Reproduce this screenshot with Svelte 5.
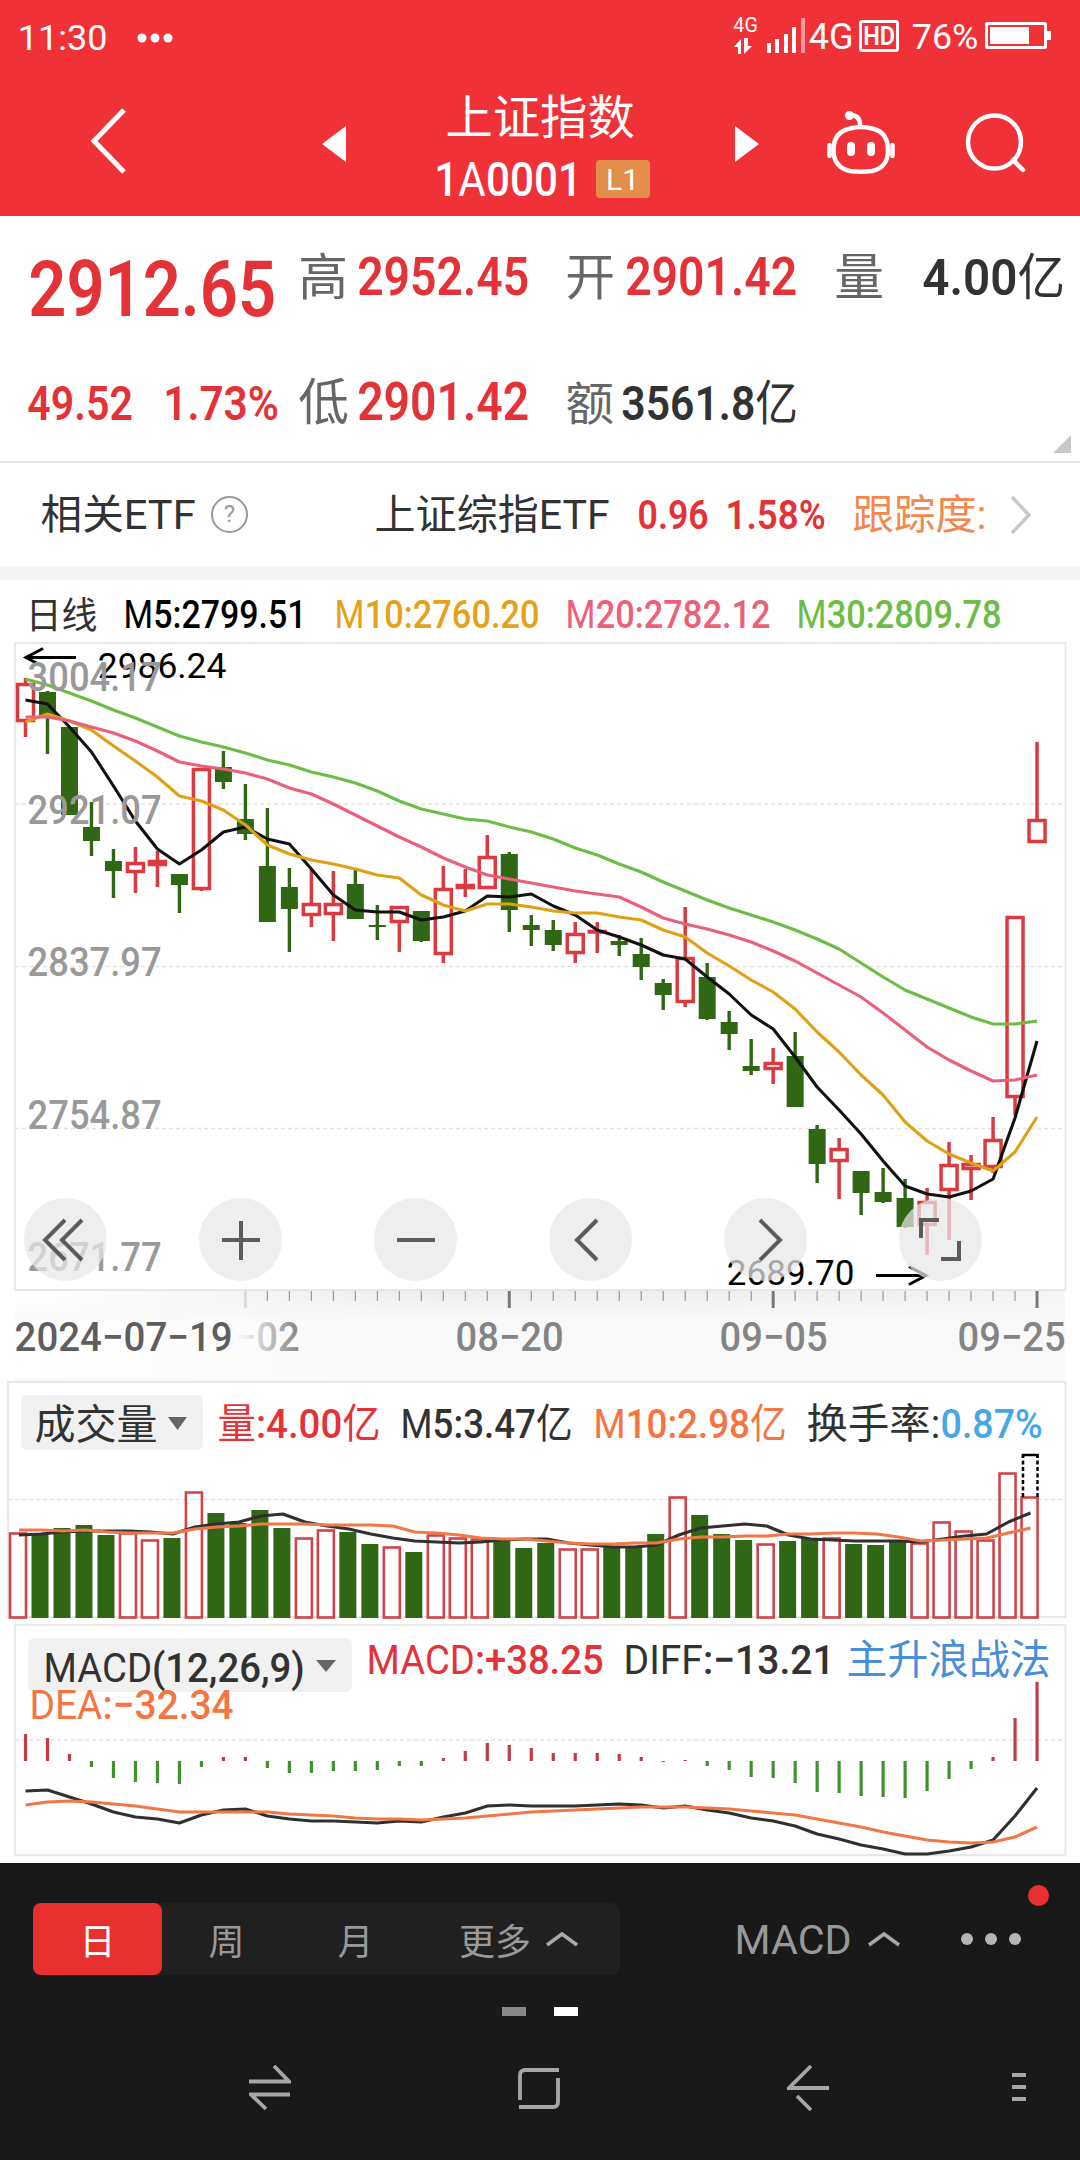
<script>
  const START = 25.5;
  const STEP = 21.99;
  const VOL_START = 18;

  // [high, body top, body bottom, low, rising]
  const candles = [
    [678, 683, 722, 737, 1], [691, 692, 718, 754, 0], [727, 727, 815, 815, 0], [802, 827, 841, 856, 0],
    [849, 861, 871, 898, 0], [847, 862, 873, 893, 1], [851, 860, 866, 887, 1], [874, 874, 885, 913, 0],
    [768, 768, 890, 891, 1], [751, 767, 782, 789, 0], [784, 819, 834, 840, 0], [808, 866, 922, 922, 0],
    [868, 887, 909, 952, 0], [870, 903, 916, 927, 1], [871, 903, 915, 941, 1], [870, 884, 919, 919, 0],
    [905, 925, 927, 940, 0], [906, 906, 923, 952, 1], [911, 911, 941, 942, 0], [866, 888, 955, 963, 1],
    [869, 884, 889, 897, 1], [835, 856, 889, 889, 1], [852, 854, 910, 932, 0], [915, 925, 930, 946, 0],
    [920, 930, 945, 951, 0], [922, 933, 954, 963, 1], [922, 930, 933, 953, 1], [935, 941, 945, 956, 0],
    [938, 954, 967, 980, 0], [979, 983, 995, 1010, 0], [907, 957, 1003, 1007, 1], [963, 977, 1019, 1020, 0],
    [1011, 1022, 1034, 1050, 0], [1039, 1066, 1071, 1075, 0], [1048, 1062, 1070, 1084, 1], [1032, 1056, 1107, 1107, 0],
    [1125, 1129, 1164, 1183, 0], [1138, 1148, 1162, 1199, 1], [1171, 1171, 1193, 1215, 0], [1168, 1192, 1202, 1203, 0],
    [1179, 1198, 1227, 1228, 0], [1188, 1201, 1226, 1255, 1], [1142, 1164, 1191, 1240, 1], [1155, 1163, 1170, 1200, 1],
    [1117, 1139, 1168, 1173, 1], [916, 916, 1098, 1115, 1], [742, 819, 843, 843, 1]
  ];

  const averages = [
    { cls: 'm30', ys: [679, 685, 693, 701, 710, 718, 727, 736, 742, 747, 753, 760, 765, 772, 777, 783, 791, 801, 809, 814, 819, 821, 827, 832, 839, 848, 855, 864, 872, 882, 891, 900, 908, 915, 922, 930, 939, 949, 963, 977, 990, 999, 1008, 1017, 1024, 1024, 1021] },
    { cls: 'm5', ys: [700, 704, 727, 752, 786, 821, 849, 864, 850, 832, 827, 839, 844, 869, 895, 910, 912, 912, 920, 917, 911, 896, 897, 894, 906, 915, 930, 937, 945, 955, 959, 977, 994, 1015, 1029, 1057, 1087, 1110, 1134, 1161, 1186, 1194, 1197, 1191, 1179, 1118, 1041] },
    { cls: 'm10', ys: [722, 714, 721, 730, 746, 761, 777, 796, 801, 810, 825, 845, 854, 860, 864, 869, 875, 878, 895, 905, 911, 904, 904, 907, 911, 913, 913, 917, 920, 930, 937, 953, 966, 980, 992, 1009, 1032, 1052, 1075, 1095, 1122, 1141, 1154, 1163, 1171, 1152, 1117] },
    { cls: 'm20', ys: [717, 717, 721, 727, 733, 741, 751, 762, 766, 769, 773, 779, 788, 794, 804, 815, 826, 837, 847, 858, 867, 875, 879, 883, 887, 891, 894, 897, 907, 918, 924, 929, 935, 942, 951, 961, 973, 985, 997, 1013, 1030, 1047, 1060, 1071, 1081, 1080, 1075] }
  ];

  const volumeTops = [1533, 1533, 1528, 1525, 1535, 1533, 1540, 1538, 1492, 1513, 1523, 1510, 1528, 1538, 1530, 1532, 1544, 1547, 1552, 1535, 1538, 1539, 1541, 1548, 1543, 1549, 1549, 1546, 1546, 1534, 1497, 1515, 1534, 1540, 1544, 1541, 1539, 1538, 1544, 1545, 1541, 1543, 1522, 1531, 1540, 1473, 1497];
  const risingVolume = [0, 5, 6, 8, 13, 14, 17, 19, 20, 21, 25, 26, 30, 34, 37, 41, 42, 43, 44, 45, 46];
  const volM5 = [1535, 1534, 1532, 1531, 1531, 1531, 1532, 1534, 1527, 1524, 1522, 1516, 1514, 1522, 1526, 1529, 1534, 1538, 1541, 1542, 1543, 1542, 1540, 1539, 1539, 1543, 1545, 1547, 1547, 1545, 1535, 1528, 1526, 1524, 1526, 1535, 1539, 1540, 1541, 1541, 1541, 1542, 1539, 1536, 1534, 1522, 1513];
  const volM10 = [1530, 1530, 1531, 1530, 1532, 1533, 1533, 1533, 1529, 1527, 1526, 1524, 1524, 1524, 1525, 1525, 1525, 1526, 1532, 1533, 1535, 1538, 1539, 1539, 1541, 1543, 1544, 1544, 1543, 1543, 1539, 1537, 1537, 1536, 1536, 1534, 1534, 1533, 1533, 1534, 1537, 1541, 1540, 1539, 1538, 1533, 1528];

  const ZERO = 1761;
  const macd = [1734, 1738, 1754, 1767, 1778, 1782, 1783, 1784, 1767, 1757, 1757, 1768, 1773, 1773, 1771, 1771, 1770, 1766, 1766, 1758, 1751, 1743, 1745, 1748, 1753, 1753, 1753, 1754, 1757, 1762, 1760, 1766, 1770, 1777, 1778, 1783, 1792, 1793, 1796, 1797, 1798, 1791, 1779, 1769, 1757, 1718, 1682];
  const diff = [1791, 1790, 1797, 1804, 1812, 1817, 1819, 1823, 1815, 1810, 1809, 1816, 1819, 1821, 1821, 1822, 1823, 1821, 1822, 1817, 1813, 1806, 1805, 1806, 1806, 1806, 1805, 1804, 1805, 1808, 1806, 1810, 1813, 1818, 1821, 1826, 1834, 1839, 1845, 1849, 1854, 1854, 1851, 1847, 1840, 1816, 1788];
  const dea = [1805, 1802, 1801, 1802, 1804, 1806, 1809, 1812, 1812, 1812, 1812, 1812, 1814, 1815, 1816, 1818, 1819, 1819, 1820, 1819, 1818, 1816, 1814, 1812, 1811, 1810, 1809, 1808, 1807, 1807, 1807, 1808, 1809, 1811, 1813, 1815, 1819, 1823, 1827, 1832, 1836, 1840, 1842, 1843, 1842, 1837, 1827];

  const priceLabels = [['3004.17', 691], ['2921.07', 824], ['2837.97', 976], ['2754.87', 1129], ['2671.77', 1271]];
  const ticks = Array.from({ length: 37 }, (_, i) => i + 10);

  const tools = [
    'M41 22 21 42 41 62 M58 22 38 42 58 62',
    'M23 42H61 M42 23V62',
    'M23 42H61',
    'M48 22 28 42 48 62',
    'M36 22 56 42 36 62',
    'M22 40V22H40 M60 43V61H42'
  ];

  const periods = ['日', '周', '月'];
  let period = $state('日');

  function line(ys, start = START) {
    return ys.map((y, i) => `${(start + i * STEP).toFixed(1)},${y}`).join(' ');
  }

  // digits are set heavier than letters and hanzi
  function runs(text) {
    return text.match(/[\d.:,%+−()]+|[^\d.:,%+−()]+/g);
  }
</script>

{#snippet label(text, x, y, width, size, cls = '')}
  <text class="label {cls}" x={x - size * 0.035} {y} font-size={size} textLength={width + size * 0.075} lengthAdjust="spacingAndGlyphs">{#each runs(text) as run}<tspan class:digits={/\d/.test(run)}>{run}</tspan>{/each}</text>
{/snippet}

{#snippet fit(text, width, size, cls = '')}
  <svg class="fit" {width} height={Math.round(size * 0.71)}>
    {@render label(text, 0, Math.round(size * 0.71), width, size, cls)}
  </svg>
{/snippet}

<div class="screen">
  <header>
    <div class="status">
      <div class="status-left">
        {@render fit('11:30', 87, 35, 'white plain')}
        <svg width="36" height="10"><circle cx="5" cy="5" r="4.5" /><circle cx="18" cy="5" r="4.5" /><circle cx="31" cy="5" r="4.5" /></svg>
      </div>
      <div class="status-right">
        <svg width="79" height="40" viewBox="731 16 79 40">
          {@render label('4G', 734, 32, 23, 21, 'white plain')}
          <path d="M741 54V39l-7 8h4v7z M744 38V54l8-8h-4v-8z" />
          <path d="M767 43h4v10h-4z M775 39h4v14h-4z M784 34h4v19h-4z M792 27h4v26h-4z" />
          <path opacity=".5" d="M801 18h4v35h-4z" />
        </svg>
        {@render fit('4G', 42, 37, 'white plain')}
        <svg class="hd" width="40" height="32">
          <rect x="1.5" y="1.5" width="37" height="29" rx="2" fill="none" stroke="#fff" stroke-width="3" />
          {@render label('HD', 5, 25, 30, 25, 'white strong')}
        </svg>
        {@render fit('76%', 64, 35, 'white plain')}
        <svg class="battery" width="66" height="28">
          <rect x="1.5" y="1.5" width="59" height="24" rx="1" fill="none" stroke="#fff" stroke-width="3" />
          <path d="M5 5h39v17H5z M62 9h4v9h-4z" />
        </svg>
      </div>
    </div>
    <div class="titlebar">
      <svg class="back" width="40" height="68"><path class="stroke" d="M35 3 5 34 35 65" /></svg>
      <svg class="prev" width="24" height="36"><path d="M24 0v36L0 18z" /></svg>
      <div class="title">
        <div class="name">{@render fit('上证指数', 186, 46.5, 'white')}</div>
        <div class="code">
          {@render fit('1A0001', 144, 48, 'white')}
          <span class="level">{@render fit('L1', 31, 30, 'white plain')}</span>
        </div>
      </div>
      <svg class="next" width="24" height="36"><path d="M0 0v36l24-18z" /></svg>
      <svg class="robot" width="72" height="68" viewBox="825 109 72 68">
        <path class="stroke" d="M850 128.5Q861 125.5 872 128.5C884 131 888 139 888 150C888 164 881 169 872 171Q861 172.5 850 171C841 169 833.5 164 833.5 150C833.5 139 838 131 850 128.5Z" />
        <path class="stroke" d="M860 125C860 118 856 115 850 115 M829.5 145V156 M892.5 145V156" />
        <circle cx="849.5" cy="115.5" r="4.5" />
        <rect x="847" y="142" width="8" height="14" rx="4" /><rect x="867" y="142" width="8" height="14" rx="4" />
      </svg>
      <svg class="search" width="64" height="64"><circle class="stroke" cx="30.5" cy="30" r="26.5" /><path class="stroke" d="M49 48 59 58" /></svg>
    </div>
  </header>

  <section class="quote">
    <div class="quote-row">
      <div class="price">{@render fit('2912.65', 242, 78, 'red bold')}</div>
      {@render fit('高', 46, 50, 'gray')}
      {@render fit('2952.45', 168, 53, 'red bold')}
      {@render fit('开', 46, 50, 'gray')}
      {@render fit('2901.42', 168, 53, 'red bold')}
      {@render fit('量', 46, 50, 'gray')}
      {@render fit('4.00亿', 139, 50, 'dark bold')}
    </div>
    <div class="quote-row">
      <div class="change">
        {@render fit('49.52', 102, 47.5, 'red bold')}
        {@render fit('1.73%', 112, 47.5, 'red bold')}
      </div>
      {@render fit('低', 47, 50, 'gray')}
      {@render fit('2901.42', 168, 53, 'red bold')}
      {@render fit('额', 45, 46, 'gray')}
      <div class="amount">{@render fit('3561.8亿', 173, 47.5, 'dark bold')}</div>
    </div>
    <svg class="corner" width="18" height="18"><path d="M18 0v18H0z" /></svg>
  </section>

  <section class="etf">
    {@render fit('相关ETF', 152, 41, 'dark')}
    <span class="help">?</span>
    <div class="etf-name">{@render fit('上证综指ETF', 232, 41, 'dark')}</div>
    {@render fit('0.96', 68, 41, 'red bold')}
    {@render fit('1.58%', 97, 41, 'red bold')}
    <div class="track">{@render fit('跟踪度:', 131, 41, 'track-text')}</div>
    <svg class="more" width="22" height="40"><path d="M2 2 19 20 2 38" /></svg>
  </section>

  <section class="kline">
    <svg width="1080" height="798" viewBox="0 580 1080 798">
      <defs>
        <linearGradient id="axis" x1="0" x2="1"><stop offset="0" stop-color="#fff" /><stop offset=".35" stop-color="#f9f9f9" /><stop offset="1" stop-color="#f9f9f9" /></linearGradient>
        <linearGradient id="shade" x1="0" x2="1"><stop offset="0.05" stop-color="#eee" stop-opacity="0" /><stop offset=".4" stop-color="#eee" /><stop offset=".9" stop-color="#f1f1f1" /><stop offset="1" stop-color="#f6f6f6" /></linearGradient>
        <linearGradient id="drop" x1="0" y1="0" x2="0" y2="1"><stop offset="0" stop-color="#f9f9f9" stop-opacity="0" /><stop offset="1" stop-color="#f9f9f9" /></linearGradient>
        <linearGradient id="fade" x1="0" x2="1"><stop offset="0" stop-color="#fcfcfc" /><stop offset=".5" stop-color="#fcfcfc" stop-opacity=".92" /><stop offset="1" stop-color="#fafafa" stop-opacity="0" /></linearGradient>
      </defs>

      {@render label('日线', 27, 629, 69, 37, 'dark')}
      {@render label('M5:2799.51', 125, 628, 180, 39.5, 'black')}
      {@render label('M10:2760.20', 336, 628, 202, 39.5, 'm10-text')}
      {@render label('M20:2782.12', 567, 628, 202, 39.5, 'm20-text')}
      {@render label('M30:2809.78', 798, 628, 202, 39.5, 'm30-text')}

      <rect x="15" y="1291" width="1050" height="87" fill="url(#axis)" />
      <rect x="15" y="1291" width="1050" height="28" fill="url(#shade)" />
      <rect x="15" y="1291" width="1050" height="29" fill="url(#drop)" />
      <rect class="frame" x="15" y="643" width="1050.5" height="647" />
      {#each [804, 966.5, 1128.5] as y}
        <path class="grid" d="M15 {y}H1065" />
      {/each}

      {#each candles as [high, top, bottom, low, up], i}
        {@const x = START + i * STEP}
        {#if up}
          <path class="up" d="M{x} {high}V{top} M{x} {bottom}V{low}" />
          <rect class="up" x={x - 8} y={top + 1.5} width="16" height={Math.max(bottom - top - 3, 0.5)} />
        {:else}
          <path class="down-wick" d="M{x} {high}V{low}" />
          <rect class="down" x={x - 8.5} y={top} width="17" height={bottom - top} />
        {/if}
      {/each}
      {#each averages as { cls, ys }}
        <polyline class="avg {cls}" points={line(ys)} />
      {/each}

      <path class="arrow" d="M76 657.5H26 M43 648.5 26 657.5 43 666.5" />
      {@render label('2986.24', 99, 678, 126, 35, 'black plain')}
      {#each priceLabels as [text, y]}
        {@render label(text, 29, y, 131, 40.5, 'scale')}
      {/each}
      {@render label('2689.70', 728, 1284.5, 125, 35, 'black plain')}
      <path class="arrow" d="M876 1275.5H926 M909 1266.5 926 1275.5 909 1284.5" />

      {#each ticks as i}
        {@const x = START + i * STEP}
        {@const major = i % 12 === 10}
        <path class="tick" class:major class:faded={i === 10} d="M{x} 1291V{major ? 1308 : 1301}" />
      {/each}
      {@render label('08−02', 193, 1351, 105, 40.5, 'date')}
      {@render label('08−20', 457, 1351, 105, 40.5, 'date')}
      {@render label('09−05', 721, 1351, 105, 40.5, 'date')}
      {@render label('09−25', 959, 1351, 105, 40.5, 'date')}
      <rect x="188" y="1318" width="112" height="44" fill="url(#fade)" />
      {@render label('2024−07−19', 16, 1351, 215, 40.5, 'date-first')}
    </svg>
    <div class="tools">
      {#each tools as d}
        <button aria-label="chart control"><svg width="83" height="83"><path {d} /></svg></button>
      {/each}
    </div>
  </section>

  <section>
    <svg width="1080" height="243" viewBox="0 1378 1080 243">
      <rect x="15" y="1378" width="1050" height="4" fill="#f9f9f9" />
      <rect class="frame" x="8" y="1382" width="1057.5" height="235" />
      <path class="grid" d="M8 1499.5H1065" />
      <rect class="chip" x="21" y="1395" width="182" height="55" rx="6" />
      {@render label('成交量', 36, 1439, 120, 41, 'dark')}
      <path class="caret" d="M168 1417H187L177.5 1430Z" />
      {@render label('量:4.00亿', 219, 1438, 160, 40.5, 'red')}
      {@render label('M5:3.47亿', 402, 1438, 169, 40.5, 'dark')}
      {@render label('M10:2.98亿', 595, 1438, 190, 40.5, 'orange')}
      {@render label('换手率:', 808, 1438, 131, 40.5, 'dark')}
      {@render label('0.87%', 942, 1438, 99, 40.5, 'sky')}
      {#each volumeTops as top, i}
        {@const x = VOL_START + i * STEP}
        {#if risingVolume.includes(i)}
          <rect class="up thin" x={x - 8} y={top + 0.5} width="16" height={1617 - top} />
        {:else}
          <rect class="down" x={x - 8.5} y={top} width="17" height={1618 - top} />
        {/if}
      {/each}
      <path class="forecast" d="M1023 1497V1455 M1037.5 1497V1455" />
      <path class="forecast-top" d="M1023 1458V1455H1037.5V1458" />
      <polyline class="avg diff" points={line(volM5, VOL_START + 1)} />
      <polyline class="avg dea" points={line(volM10, VOL_START + 1)} />
    </svg>
  </section>

  <section>
    <svg width="1080" height="242" viewBox="0 1621 1080 242">
      <rect class="frame" x="15" y="1625" width="1050.5" height="230" />
      <path class="grid" d="M15 1740H1065" />
      <rect class="chip" x="28" y="1638" width="324" height="54" rx="6" />
      {@render label('MACD(12,26,9)', 45, 1682, 258, 41, 'dark')}
      <path class="caret" d="M316 1660H336L326 1672Z" />
      {@render label('MACD:+38.25', 368, 1674, 234, 41, 'red')}
      {@render label('DIFF:−13.21', 625, 1674, 208, 41, 'dark')}
      {@render label('主升浪战法', 848, 1674, 201, 41, 'blue')}
      {@render label('DEA:−32.34', 31, 1719, 201, 41, 'orange')}
      {#each macd as y, i}
        {@const x = START + i * STEP}
        <path class={y < ZERO ? 'bar-up' : 'bar-down'} d="M{x} {ZERO}V{y}" />
      {/each}
      <polyline class="avg diff" points={line(diff)} />
      <polyline class="avg dea" points={line(dea)} />
    </svg>
  </section>

  <footer>
    <div class="controls">
      <div class="segments">
        {#each periods as p}
          <button class:active={period === p} onclick={() => (period = p)}>{p}</button>
        {/each}
        <button class="expand">更多 <svg width="34" height="16"><path class="chev" d="M2 14 17 3 32 14" /></svg></button>
      </div>
      <div class="indicator">
        {@render fit('MACD', 114, 40.5, 'muted')}
        <svg width="34" height="16"><path class="chev" d="M2 14 17 3 32 14" /></svg>
      </div>
      <div class="dots"><i></i><i></i><i></i><b></b></div>
    </div>
    <div class="pager"><i></i><i class="on"></i></div>
    <div class="system">
      <svg width="42" height="46"><path d="M0 16.5H40 L25 1 M41 29.5H2 L17 44" /></svg>
      <svg width="42" height="46"><path d="M41 5H7Q2 5 2 10V35 M1 42H35Q40 42 40 37V13" /></svg>
      <svg width="42" height="48"><path d="M42 24H2L24 2 M10 32 24 46" /></svg>
      <svg width="14" height="30"><path d="M0 2H14 M0 14H14 M0 26H14" /></svg>
    </div>
  </footer>
</div>

<style>
  :global(body) {
    margin: 0;
  }

  .screen {
    width: 1080px;
    height: 2160px;
    background: #fff;
    overflow: hidden;
    font-family: Roboto, 'Noto Sans CJK SC', sans-serif;
  }

  svg {
    display: block;
    flex: none;
  }

  button {
    border: 0;
    padding: 0;
    font: inherit;
  }

  .fit,
  .status svg {
    overflow: visible;
  }

  .label {
    font-family: Roboto, 'Noto Sans CJK SC', sans-serif;
    font-weight: 400;
    white-space: pre;
  }

  .digits { font-weight: 500; }
  .bold .digits { font-weight: 600; }
  .plain .digits { font-weight: 400; }
  .strong { font-weight: 600; }

  .white { fill: #fff; }
  .red { fill: #e33238; }
  .gray { fill: #666; }
  .dark { fill: #323232; }
  .black { fill: #000; }
  .orange { fill: #f57440; }
  .track-text { fill: #f2884f; }
  .sky { fill: #46a6e8; }
  .blue { fill: #478edb; }
  .muted { fill: #999; }
  .scale { fill: #999; }
  .date { fill: #848484; }
  .date-first { fill: #5e5e5e; }
  .m10-text { fill: #e5a117; }
  .m20-text { fill: #ed607a; }
  .m30-text { fill: #6bbd45; }

  header {
    height: 216px;
    background: #f13138;
  }

  header svg { fill: #fff; }

  .stroke {
    fill: none;
    stroke: #fff;
    stroke-width: 4.5;
    stroke-linecap: round;
  }

  .back .stroke { stroke-width: 5; stroke-linecap: butt; }

  .status {
    height: 72px;
    display: flex;
    justify-content: space-between;
    padding: 0 29px 0 19px;
  }

  .status-left,
  .status-right {
    display: flex;
    align-items: center;
  }

  .status-left { gap: 31px; padding-top: 3px; }
  .hd { margin: 0 14px 0 7px; }
  .battery { margin-left: 8px; }

  .titlebar {
    height: 144px;
    display: flex;
    align-items: flex-start;
    padding-left: 89px;
  }

  .back { margin-top: 35px; }
  .prev { margin: 54px 0 0 193px; }
  .next { margin: 54px 0 0 85px; }
  .robot { margin: 37px 0 0 66px; }
  .search { margin: 40px 0 0 67px; }

  .title {
    width: 215px;
    margin-left: 89px;
    padding-top: 29px;
    display: flex;
    flex-direction: column;
    align-items: center;
    gap: 24px;
  }

  .name { margin-right: 5px; }

  .code {
    display: flex;
    gap: 16px;
    align-items: center;
    margin-top: 2px;
  }

  .level {
    display: flex;
    align-items: center;
    justify-content: center;
    width: 54px;
    height: 38px;
    border-radius: 4px;
    background: #e48e4b;
  }

  .quote {
    height: 245px;
    border-bottom: 2px solid #e6e6e6;
    position: relative;
  }

  .quote-row {
    display: grid;
    grid-template-columns: 269px 59px 208px 60px 209px 88px auto;
    align-items: end;
    padding-left: 31px;
  }

  .quote-row:first-child { height: 79px; }
  .quote-row:nth-child(2) { height: 125px; }

  .price { margin-bottom: -21px; }
  .change { display: flex; gap: 34px; margin-left: -2px; }
  .amount { margin-left: -4px; }

  .corner {
    position: absolute;
    right: 9px;
    bottom: 8px;
    fill: #c9c9c9;
  }

  .etf {
    height: 103px;
    border-bottom: 14px solid #f5f5f5;
    display: flex;
    align-items: center;
    padding-left: 42px;
  }

  .help {
    box-sizing: border-box;
    width: 37px;
    height: 37px;
    margin-left: 17px;
    border: 2px solid #999;
    border-radius: 50%;
    color: #999;
    font-size: 24px;
    line-height: 33px;
    text-align: center;
  }

  .etf-name { margin: 0 31px 0 128px; }
  .track { margin: 0 25px 0 30px; }
  .etf > .fit + .fit { margin-left: 20px; }
  .more path { fill: none; stroke: #c8c8c8; stroke-width: 3.5; }

  .kline { position: relative; }

  .frame { fill: none; stroke: #e8e8e8; stroke-width: 2; }
  .grid { stroke: #e4e4e4; stroke-width: 1.5; stroke-dasharray: 4 3; }
  .up { fill: none; stroke: #da3a40; stroke-width: 3.5; }
  .thin { stroke: #d0444a; stroke-width: 2.6; }
  .down { fill: #2f6714; }
  .down-wick { stroke: #2f6714; stroke-width: 3.4; }
  .avg { fill: none; stroke-width: 3.1; stroke-linejoin: round; }
  .m5 { stroke: #111; }
  .m10 { stroke: #e0a015; }
  .m20 { stroke: #ea5f79; }
  .m30 { stroke: #6bbd45; }
  .diff { stroke: #303030; }
  .dea { stroke: #f07846; }
  .arrow { fill: none; stroke: #000; stroke-width: 3; }
  .tick { stroke: #999; stroke-width: 1.2; }
  .major { stroke: #777; stroke-width: 3; }
  .faded { stroke: #dcdcdc; }
  .chip { fill: #f1f1f1; }
  .caret { fill: #666; }
  .forecast { stroke: #000; stroke-width: 2.5; stroke-dasharray: 4 2.5; }
  .forecast-top { fill: none; stroke: #000; stroke-width: 2.5; }
  .bar-up { stroke: #c53b43; stroke-width: 3.2; }
  .bar-down { stroke: #3f932f; stroke-width: 3.2; }

  .tools {
    position: absolute;
    top: 618px;
    left: 24px;
    display: flex;
    gap: 92px;
  }

  .tools button {
    width: 83px;
    height: 83px;
    border-radius: 50%;
    background: rgba(232, 232, 232, 0.72);
  }

  .tools path { fill: none; stroke: #5b5b5b; stroke-width: 4; }

  footer {
    height: 297px;
    background: #191919;
  }

  .controls {
    display: flex;
    align-items: center;
    height: 72px;
    padding: 40px 0 0 33px;
  }

  .segments {
    display: flex;
    width: 587px;
    height: 72px;
    border-radius: 8px;
    background: #202020;
  }

  .segments button {
    width: 129px;
    border-radius: 8px;
    background: none;
    color: #999;
    font-size: 36px;
  }

  .segments .active { background: #e83030; color: #fff; }

  .segments .expand {
    display: flex;
    align-items: center;
    gap: 14px;
    width: auto;
    margin-left: 39px;
  }

  .chev { fill: none; stroke: #a8a8a8; stroke-width: 3.5; }
  .indicator { display: flex; align-items: center; gap: 17px; margin-left: 116px; }
  .dots { display: flex; gap: 12px; margin-left: 60px; position: relative; }
  .dots i { width: 12px; height: 12px; border-radius: 50%; background: #b4b4b4; }

  .dots b {
    position: absolute;
    left: 67px;
    top: -48px;
    width: 21px;
    height: 21px;
    border-radius: 50%;
    background: #e83030;
  }

  .pager {
    display: flex;
    justify-content: center;
    gap: 28px;
    margin-top: 32px;
  }

  .pager i { width: 24px; height: 9px; background: #888; }
  .pager .on { background: #fff; }

  .system {
    display: grid;
    grid-template-columns: 269px 269px 225px auto;
    align-items: center;
    padding: 48px 0 0 249px;
  }

  .system path { fill: none; stroke: #a6a6a6; stroke-width: 3.8; }
</style>
